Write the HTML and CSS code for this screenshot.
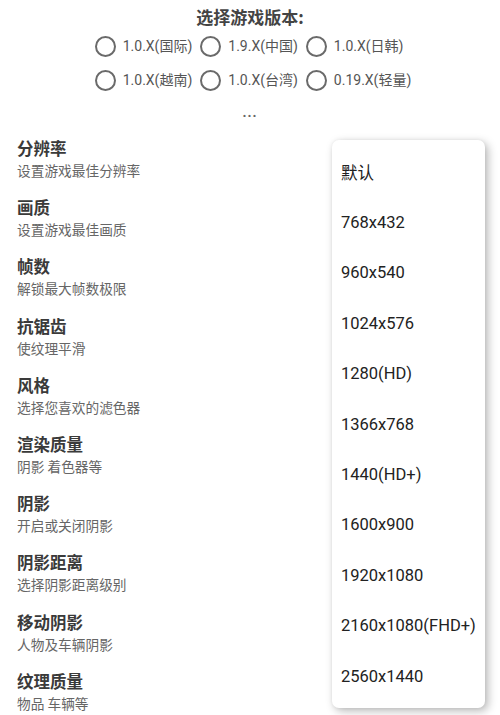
FILE: index.html
```html
<!DOCTYPE html>
<html lang="zh-CN">
<head>
<meta charset="utf-8">
<link rel="stylesheet" href="styles.css">
</head>
<body>
<div class="page">
  <div class="version">
    <div class="version-title">选择游戏版本:</div>
    <div class="radios">
      <label class="radio"><span class="circle"></span>1.0.X(国际)</label>
      <label class="radio"><span class="circle"></span>1.9.X(中国)</label>
      <label class="radio"><span class="circle"></span>1.0.X(日韩)</label>
      <label class="radio"><span class="circle"></span>1.0.X(越南)</label>
      <label class="radio"><span class="circle"></span>1.0.X(台湾)</label>
      <label class="radio"><span class="circle"></span>0.19.X(轻量)</label>
    </div>
    <div class="dots">...</div>
  </div>
  <ul class="settings">
    <li class="setting"><div class="s-title">分辨率</div><div class="s-sub">设置游戏最佳分辨率</div></li>
    <li class="setting"><div class="s-title">画质</div><div class="s-sub">设置游戏最佳画质</div></li>
    <li class="setting"><div class="s-title">帧数</div><div class="s-sub">解锁最大帧数极限</div></li>
    <li class="setting"><div class="s-title">抗锯齿</div><div class="s-sub">使纹理平滑</div></li>
    <li class="setting"><div class="s-title">风格</div><div class="s-sub">选择您喜欢的滤色器</div></li>
    <li class="setting"><div class="s-title">渲染质量</div><div class="s-sub">阴影 着色器等</div></li>
    <li class="setting"><div class="s-title">阴影</div><div class="s-sub">开启或关闭阴影</div></li>
    <li class="setting"><div class="s-title">阴影距离</div><div class="s-sub">选择阴影距离级别</div></li>
    <li class="setting"><div class="s-title">移动阴影</div><div class="s-sub">人物及车辆阴影</div></li>
    <li class="setting"><div class="s-title">纹理质量</div><div class="s-sub">物品 车辆等</div></li>
  </ul>
  <ul class="menu">
    <li class="menu-item">默认</li>
    <li class="menu-item">768x432</li>
    <li class="menu-item">960x540</li>
    <li class="menu-item">1024x576</li>
    <li class="menu-item">1280(HD)</li>
    <li class="menu-item">1366x768</li>
    <li class="menu-item">1440(HD+)</li>
    <li class="menu-item">1600x900</li>
    <li class="menu-item">1920x1080</li>
    <li class="menu-item">2160x1080(FHD+)</li>
    <li class="menu-item">2560x1440</li>
  </ul>
</div>
</body>
</html>
```
FILE: styles.css
```css
html, body {
  margin: 0;
  padding: 0;
  background: #ffffff;
}
body {
  font-family: Roboto, "Noto Sans CJK SC", sans-serif;
  color: #333;
  width: 500px;
  height: 715px;
  overflow: hidden;
}
.page {
  position: relative;
  width: 500px;
  height: 715px;
}
.version {
  display: flex;
  flex-direction: column;
  align-items: center;
  padding-top: 5px;
}
.version-title {
  font-family: "Noto Sans CJK SC", sans-serif;
  font-weight: 700;
  font-size: 17px;
  line-height: 24px;
  color: #444;
}
.radios {
  display: grid;
  grid-template-columns: repeat(3, auto);
  column-gap: 8px;
  row-gap: 10px;
  margin-top: 5px;
  margin-left: 6px;
}
.radio {
  display: flex;
  align-items: center;
  gap: 7px;
  font-size: 14px;
  line-height: 24px;
  color: #555;
}
.circle {
  width: 17px;
  height: 17px;
  border: 2px solid #6a6a6a;
  border-radius: 50%;
  flex: none;
}
.dots {
  font-size: 14px;
  font-weight: 700;
  color: #666;
  line-height: 14px;
  margin-top: 13px;
  letter-spacing: 1px;
}
.settings {
  list-style: none;
  margin: 0;
  padding: 17px 0 0 17px;
  display: flex;
  flex-direction: column;
  gap: 14.2px;
}
.setting {
  display: flex;
  flex-direction: column;
}
.s-title {
  font-family: "Noto Sans CJK SC", sans-serif;
  font-weight: 700;
  font-size: 16.5px;
  line-height: 24px;
  color: #3a3a3a;
}
.s-sub {
  font-family: "Noto Sans CJK SC", sans-serif;
  font-size: 13.7px;
  line-height: 21px;
  color: #666;
}
.menu {
  position: absolute;
  left: 332px;
  top: 140px;
  width: 153px;
  height: 568px;
  margin: 0;
  padding: 7px 0 0 0;
  box-sizing: border-box;
  list-style: none;
  background: #fff;
  border-radius: 7px;
  box-shadow: 3px 3px 10px rgba(0, 0, 0, 0.28), 0 0 4px rgba(0, 0, 0, 0.06);
}
.menu-item {
  height: 50.4px;
  display: flex;
  align-items: center;
  padding-left: 9px;
  font-size: 16.5px;
  color: #222;
  font-family: Roboto, "Noto Sans CJK SC", sans-serif;
}
```
